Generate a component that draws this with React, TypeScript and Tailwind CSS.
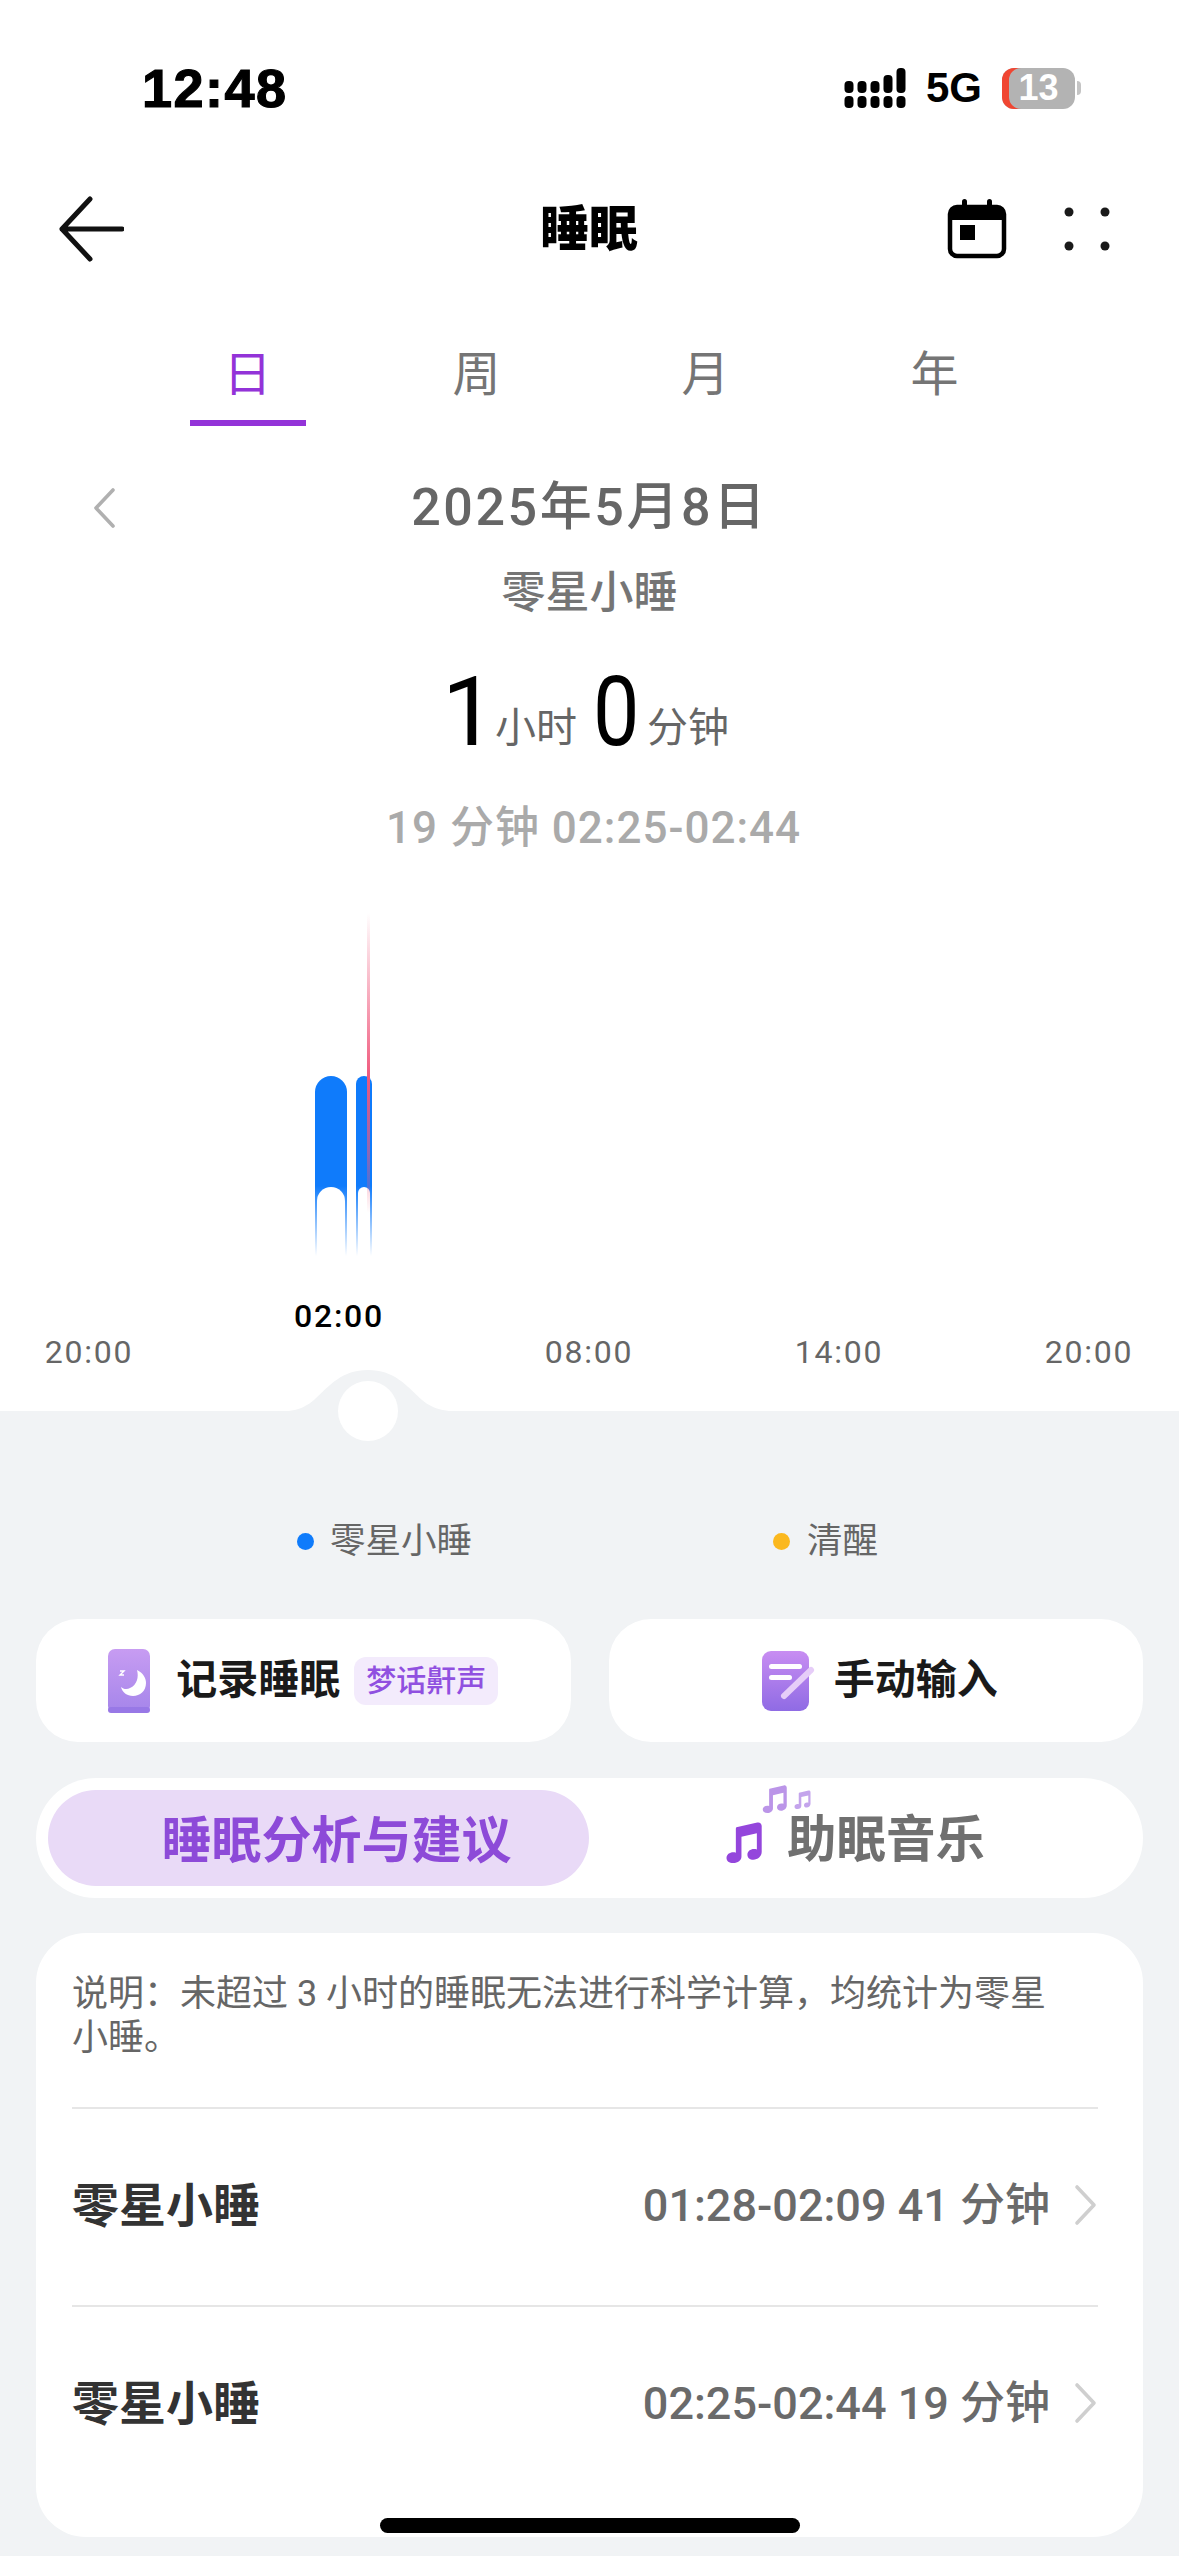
const CJK = "font-['Roboto','Noto_Sans_CJK_SC',sans-serif]";

function Signal() {
  const cols: [number, number][] = [[849, 80], [862, 80], [875, 80], [888, 74], [901, 67]];
  return (
    <svg width="62" height="42" viewBox="844 66 62 42">
      {cols.map(([x, top]) => (
        <g key={x}>
          <rect x={x - 4.5} y={95} width={9} height={12} rx={4} fill="#000" />
          <rect x={x - 4.5} y={top} width={9} height={92 - top} rx={4} fill="#000" />
        </g>
      ))}
    </svg>
  );
}

function Calendar() {
  return (
    <svg width="60" height="62" viewBox="0 0 60 62">
      <rect x="3" y="9" width="54" height="49" rx="7" fill="none" stroke="#000" strokeWidth="4.5" />
      <path d="M3 16a7 7 0 0 1 7-7h40a7 7 0 0 1 7 7v6H3z" fill="#000" />
      <rect x="15" y="1" width="5" height="12" rx="2.5" fill="#000" />
      <rect x="40" y="1" width="5" height="12" rx="2.5" fill="#000" />
      <rect x="13" y="27" width="15" height="15" fill="#000" />
    </svg>
  );
}

function Dots() {
  return (
    <svg width="46" height="46" viewBox="0 0 46 46">
      <circle cx="5" cy="6" r="4.5" fill="#1a1a1a" />
      <circle cx="41" cy="6" r="4.5" fill="#1a1a1a" />
      <circle cx="5" cy="40" r="4.5" fill="#1a1a1a" />
      <circle cx="41" cy="40" r="4.5" fill="#1a1a1a" />
    </svg>
  );
}

function Note({ size, color }: { size: number; color: string }) {
  return (
    <svg width={size} height={size} viewBox="0 0 40 40">
      <path
        fill={color}
        d="M14 7.5 33 3.2c2.2-.5 4 .9 4 3.2V30c0 3.9-3.6 7-7.6 7-3.2 0-5.4-1.9-5.4-4.6 0-3 2.6-5.2 6-5.2 1 0 1.8.1 2.6.5V13l-14 3.2V34c0 3.5-3.4 6-7.4 6C7.3 40 5 38.1 5 35.4c0-3 2.7-5.2 6.2-5.2.9 0 1.6.1 2.3.4V10c0-1 0-2.2.5-2.5z"
      />
    </svg>
  );
}

function MoonIcon() {
  return (
    <svg width="42" height="64" viewBox="0 0 42 64">
      <defs>
        <linearGradient id="mg" x1="0" y1="0" x2="0" y2="1">
          <stop offset="0" stopColor="#c79cf2" />
          <stop offset="1" stopColor="#a585ea" />
        </linearGradient>
      </defs>
      <rect width="42" height="64" rx="7" fill="url(#mg)" />
      <rect y="58" width="42" height="6" rx="3" fill="#9878e6" />
      <path d="M29 21c6 3 9 8 9 13 0 8-6 13-13 13-6 0-11-4-12-9 2 2 6 3 9 1 7-3 9-11 7-18z" fill="#fff" />
      <path d="M12 22h4l-4 4h4" fill="none" stroke="#fff" strokeWidth="1.4" />
    </svg>
  );
}

function NoteIcon() {
  return (
    <svg width="54" height="62" viewBox="0 0 54 62">
      <defs>
        <linearGradient id="ng" x1="0" y1="0" x2="0" y2="1">
          <stop offset="0" stopColor="#c88df2" />
          <stop offset="1" stopColor="#8f6be4" />
        </linearGradient>
      </defs>
      <rect width="47" height="60" rx="9" y="1" fill="url(#ng)" />
      <rect x="7" y="14" width="33" height="5" rx="2.5" fill="#fff" />
      <rect x="7" y="25" width="23" height="5" rx="2.5" fill="#fff" />
      <path d="M22 46 49 20" stroke="#e6cdf8" strokeWidth="6" strokeLinecap="round" />
    </svg>
  );
}

function Chevron({ left = false, color = "#cfcfcf", w = 24, h = 42 }: { left?: boolean; color?: string; w?: number; h?: number }) {
  return (
    <svg width={w} height={h} viewBox="0 0 24 42">
      <path
        d={left ? "M21 3 4 21l17 18" : "M3 3 20 21 3 39"}
        fill="none"
        stroke={color}
        strokeWidth="3.6"
        strokeLinecap="round"
        strokeLinejoin="round"
      />
    </svg>
  );
}

function Row({ label, value }: { label: string; value: string }) {
  return (
    <div className="flex h-[198px] items-center justify-between border-t-2 border-[#e6e6e6] pb-[4px]">
      <span className="text-[47px] leading-none font-bold text-[#333]">{label}</span>
      <div className="flex items-center gap-[24px]">
        <span className="text-[45px] leading-none font-medium text-[#6a6a6a]">{value}</span>
        <Chevron />
      </div>
    </div>
  );
}

export default function App() {
  return (
    <div className={`relative flex h-[2556px] w-[1179px] flex-col overflow-hidden bg-white ${CJK}`}>
      <div className="flex h-[176px] items-center justify-between pl-[142px] pr-[98px]">
        <span className="font-['Liberation_Sans',sans-serif] text-[54px] leading-none font-bold tracking-[1.5px] text-black [-webkit-text-stroke:1.2px_black]">12:48</span>
        <div className="flex items-center gap-[20px]">
          <Signal />
          <span className="font-['Liberation_Sans',sans-serif] text-[42px] leading-none font-bold text-black">5G</span>
          <div className="flex items-center gap-[2px]">
            <div className="flex h-[41px] w-[73px] items-center justify-center rounded-[12px] bg-[#b3b3b3] [box-shadow:inset_7px_0_0_#f04632]">
              <span className="font-['Liberation_Sans',sans-serif] text-[36px] leading-none font-bold text-white">13</span>
            </div>
            <div className="h-[14px] w-[4px] rounded-r-full bg-[#c4c4c4]" />
          </div>
        </div>
      </div>

      <div className="relative flex h-[106px] items-center justify-between pl-[58px] pr-[69px]">
        <svg width="66" height="66" viewBox="0 0 66 66">
          <path d="M32 3 4 33l28 30M4 33h60" fill="none" stroke="#111" strokeWidth="5" strokeLinecap="round" strokeLinejoin="round" />
        </svg>
        <span className="absolute left-[540px] text-[49px] leading-none font-black text-black">睡眠</span>
        <div className="flex items-center gap-[57px]">
          <Calendar />
          <Dots />
        </div>
      </div>

      <div className="mt-[58px] flex pl-[133px]">
        {["日", "周", "月", "年"].map((t, i) => (
          <div key={t} className="flex h-[86px] w-[229px] flex-col items-center justify-between">
            <span className={`text-[48px] leading-[70px] ${i === 0 ? "text-[#9333d8]" : "text-[#757575]"}`}>{t}</span>
            {i === 0 && <div className="h-[6px] w-[116px] bg-[#9333d8]" />}
          </div>
        ))}
      </div>

      <div className="mt-[54px] grid h-[56px] grid-cols-[1fr_auto_1fr] items-center">
        <div className="pl-[92px]"><Chevron left color="#b0b0b0" w={24} h={44} /></div>
        <span className="text-[52px] leading-none font-medium tracking-[2.6px] text-[#666]">2025年5月8日</span>
        <div />
      </div>
      <div className="mt-[34px] text-center text-[44px] leading-[46px] font-medium text-[#757575]">零星小睡</div>

      <div className="mt-[46px] flex h-[100px] items-baseline justify-center gap-[13px] pr-[8px] text-[#666]">
        <span className="w-[40px] text-center text-[96px] leading-[100px] font-normal text-black">1</span>
        <span className="-translate-y-[3px] text-[41px]">小时</span>
        <span className="inline-block w-[44px] scale-x-[0.86] text-center text-[96px] leading-[100px] font-normal text-black">0</span>
        <span className="-translate-y-[3px] text-[41px]">分钟</span>
      </div>

      <div className="mt-[41px] pl-[8px] text-center text-[44px] leading-[50px] font-medium tracking-[1px] text-[#aaa]">19 分钟 02:25-02:44</div>

      <div className="relative h-[558px] flex-none">
        <div className="absolute left-[315px] top-[333px] h-[70px] w-[32px] bg-gradient-to-b from-[#0f7bfb] to-transparent" />
        <div className="absolute left-[356px] top-[333px] h-[70px] w-[16px] bg-gradient-to-b from-[#0f7bfb] to-transparent" />
        <div className="absolute left-[317px] top-[334px] h-[70px] w-[28px] rounded-t-[14px] bg-white" />
        <div className="absolute left-[358px] top-[334px] h-[70px] w-[12px] rounded-t-[6px] bg-white" />
        <div className="absolute left-[315px] top-[223px] h-[110px] w-[32px] rounded-t-[16px] bg-[#0f7bfb]" />
        <div className="absolute left-[356px] top-[223px] h-[110px] w-[16px] rounded-t-[8px] bg-[#0f7bfb]" />
        <div className="absolute left-[367px] top-[60px] h-[300px] w-[3px] bg-[linear-gradient(to_bottom,transparent,#f0587c_55%,#f0587c90_80%,transparent)]" />
        <div className="absolute bottom-[41px] left-[-36px] grid w-[1250px] grid-cols-5 text-center text-[32px] font-normal tracking-[1.8px] text-[#666]">
          <div />
          <div className="leading-[36px] font-medium text-black">02:00</div>
          <div /><div /><div />
          <div className="leading-[36px]">20:00</div>
          <div />
          <div className="leading-[36px]">08:00</div>
          <div className="leading-[36px]">14:00</div>
          <div className="leading-[36px]">20:00</div>
        </div>
      </div>

      <div className="relative flex flex-1 flex-col bg-[#f1f3f5] px-[36px]">
        <svg className="absolute left-[270px] top-[-42px]" width="200" height="43" viewBox="0 0 200 43">
          <path d="M0 43c22 0 32-2 44-12C60 16 72 1 98 1s38 15 54 30c12 10 24 12 48 12z" fill="#f1f3f5" />
        </svg>
        <div className="absolute left-[338px] top-[-30px] h-[60px] w-[60px] rounded-full bg-white" />

        <div className="mt-[112px] grid h-[36px] grid-cols-[477px_1fr] text-[35.5px] leading-[36px] text-[#666]">
          <div className="flex items-center gap-[16px] pl-[261px]">
            <div className="h-[17px] w-[17px] rounded-full bg-[#0f7bfb]" />
            <span>零星小睡</span>
          </div>
          <div className="flex items-center gap-[17px] pl-[260px]">
            <div className="h-[17px] w-[17px] rounded-full bg-[#fbb81e]" />
            <span>清醒</span>
          </div>
        </div>

        <div className="mt-[60px] grid h-[123px] grid-cols-2 gap-[38px]">
          <div className="flex items-center justify-center gap-[26px] rounded-[42px] bg-white">
            <MoonIcon />
            <div className="flex items-center gap-[14px]">
              <span className="text-[41px] leading-none font-bold text-[#1a1a1a]">记录睡眠</span>
              <span className="flex h-[48px] items-center rounded-[12px] bg-[#f3ebfc] px-[12px] text-[30px] font-medium text-[#9050e0]">梦话鼾声</span>
            </div>
          </div>
          <div className="flex items-center justify-center gap-[18px] rounded-[42px] bg-white pl-[8px]">
            <NoteIcon />
            <span className="text-[41px] leading-none font-bold text-[#1a1a1a]">手动输入</span>
          </div>
        </div>

        <div className="mt-[36px] grid h-[120px] grid-cols-[541px_1fr] items-center rounded-[60px] bg-white pl-[12px]">
          <div className="flex h-[96px] items-center justify-center rounded-[48px] bg-[#e9daf7] pl-[36px] pt-[6px] text-[50px] leading-none font-bold text-[#8d4ad8]">睡眠分析与建议</div>
          <div className="flex items-center justify-center pr-[26px] pt-[6px]">
            <div className="relative flex items-center gap-[22px]">
              <Note size={44} color="#9446dc" />
              <span className="text-[49.5px] leading-none font-bold text-[#707070]">助眠音乐</span>
              <div className="absolute left-[38px] top-[-33px]"><Note size={30} color="#bb95e8" /></div>
              <div className="absolute left-[71px] top-[-27px]"><Note size={20} color="#c4a4ec" /></div>
            </div>
          </div>
        </div>

        <div className="mt-[35px] flex h-[604px] flex-col rounded-[50px] bg-white pl-[36px] pr-[45px]">
          <p className="mt-[39px] mb-[47px] w-[1000px] text-[36px] leading-[44px] text-[#666]">
            说明：未超过 3 小时的睡眠无法进行科学计算，均统计为零星小睡。
          </p>
          <Row label="零星小睡" value="01:28-02:09 41 分钟" />
          <Row label="零星小睡" value="02:25-02:44 19 分钟" />
        </div>
      </div>

      <div className="absolute bottom-[23px] left-[380px] h-[15px] w-[420px] rounded-full bg-black" />
    </div>
  );
}
